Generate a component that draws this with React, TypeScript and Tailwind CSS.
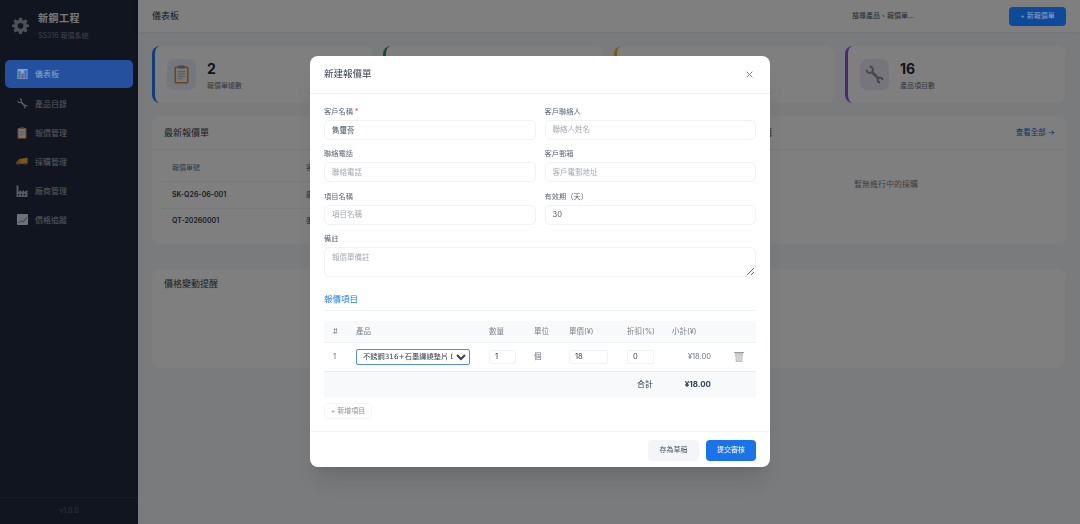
import React from "react";

const BarsIcon = () => (
  <svg viewBox="0 0 12 12" className="w-[11px] h-[12px]">
    <rect x="0.5" y="0.5" width="11" height="11" fill="#e8edf2" />
    <rect x="1.5" y="3" width="2.4" height="8" fill="#35b36b" />
    <rect x="4.8" y="5.5" width="2.4" height="5.5" fill="#e5476f" />
    <rect x="8.1" y="2" width="2.4" height="9" fill="#3a8fe0" />
  </svg>
);

const WrenchIcon = ({ className, color }: { className: string; color: string }) => (
  <svg viewBox="0 0 24 24" className={className} fill="none" stroke={color}>
    <path d="M2 6A4 4 0 1 0 6 2" strokeWidth="2.5" />
    <path d="M22 19A3 3 0 1 0 19 22" strokeWidth="2.5" />
    <path d="M8.500 8.500l8.500 8.500" strokeWidth="3.500" />
  </svg>
);

const ClipboardIcon = ({ className }: { className: string }) => (
  <svg viewBox="0 0 16 20" className={className}>
    <rect x="0.5" y="1.5" width="15" height="18" rx="1.5" fill="#e08a3c" />
    <rect x="2.2" y="3" width="11.6" height="15" fill="#f2f2f2" />
    <rect x="4.5" y="0.5" width="7" height="3" rx="0.8" fill="#8c8f94" />
    <path d="M4 7h8M4 9.5h8M4 12h8M4 14.5h5" stroke="#a5a8ad" strokeWidth="1" />
  </svg>
);

const TruckIcon = () => (
  <svg viewBox="0 0 14 10" className="w-[13px] h-[10px]">
    <path d="M4 1.500 13.500 0v7H0.500V5.500L2.500 3Z" fill="#f0b429" />
    <path d="M0.500 5.500 2.500 3H5v4.500H0.500Z" fill="#e8862a" />
    <circle cx="3" cy="8" r="1.400" fill="#555" />
    <circle cx="10.500" cy="8" r="1.400" fill="#555" />
  </svg>
);

const FactoryIcon = () => (
  <svg viewBox="0 0 12 12" className="w-[12px] h-[12px]">
    <path d="M0.500 12V0.500h2V7L5 5v2l3-2v2l3.500-2v7Z" fill="#a9b3c4" />
    <rect x="2" y="9" width="1.400" height="1.400" fill="#1f2a3d" />
    <rect x="5" y="9" width="1.400" height="1.400" fill="#1f2a3d" />
    <rect x="8" y="9" width="1.400" height="1.400" fill="#1f2a3d" />
  </svg>
);

const LineChartIcon = () => (
  <svg viewBox="0 0 12 12" className="w-[11px] h-[11px]">
    <rect width="12" height="12" rx="1" fill="#dfe4ea" />
    <path d="M1 10 4.500 7.500 7 8.500 11 3.500" stroke="#7f96b5" strokeWidth="1.200" fill="none" />
  </svg>
);

const GearIcon = () => (
  <svg viewBox="0 0 24 24" className="w-[17px] h-[17px]">
    <path
      fill="#9aa0a8"
      fillRule="evenodd"
      d="M10 1h4l.6 3.100 1.900.8L19.200 3 22 5.800l-1.900 2.700.8 1.900L24 11v3l-3.100.6-.8 1.900L22 19.200 19.200 22l-2.700-1.900-1.900.8L14 24h-4l-.6-3.100-1.900-.8L4.800 22 2 19.200l1.900-2.700-.8-1.900L0 14v-3l3.100-.6.8-1.900L2 5.800 4.800 3l2.700 1.900 1.900-.8ZM12 8.500a4 4 0 1 0 0 8 4 4 0 0 0 0-8Z"
    />
  </svg>
);

const TrashIcon = () => (
  <svg viewBox="0 0 10 11" className="w-[10px] h-[11px]">
    <path d="M0 1h10v1H0Z" fill="#9a9ea3" />
    <path d="M1 2h8l-.7 9H1.700Z" fill="#c2c5c8" />
    <path d="M3 3.500 3.500 10M5 3.500V10M7 3.500 6.500 10" stroke="#eceded" strokeWidth="0.6" />
  </svg>
);

const navItems = [
  { label: "儀表板", icon: <BarsIcon />, active: true },
  { label: "產品目錄", icon: <WrenchIcon className="w-[11px] h-[11px]" color="#b5bac2" /> },
  { label: "報價管理", icon: <ClipboardIcon className="w-[10px] h-[12px]" /> },
  { label: "採購管理", icon: <TruckIcon /> },
  { label: "廠商管理", icon: <FactoryIcon /> },
  { label: "價格追蹤", icon: <LineChartIcon /> },
];

const Sidebar = () => (
  <aside className="w-[138px] shrink-0 flex flex-col bg-[#202b3f]">
    <div className="h-[60px] flex items-start pl-[12px] pt-[11px] gap-[9px]">
      <div className="pt-[6px]">
        <GearIcon />
      </div>
      <div>
        <div className="text-[10px] leading-[14px] font-bold text-[#f0f0f0] tracking-[0.5px]">新鋼工程</div>
        <div className="text-[7px] leading-[10px] mt-[6px] text-[#7d8798]">SS316 報價系統</div>
      </div>
    </div>
    <nav className="flex flex-col px-[5px]">
      {navItems.map((item) => (
        <div
          key={item.label}
          className={
            item.active
              ? "relative z-10 h-[28px] flex items-center gap-[7px] pl-[11px] rounded-[5px] mb-[1px] bg-[#24509e] text-[#8ea3c8]"
              : "h-[29px] flex items-center gap-[7px] pl-[11px] text-[#aab4c2]"
          }
        >
          <span className={item.active ? "w-[12px] flex justify-center opacity-50" : "w-[12px] flex justify-center"}>
            {item.icon}
          </span>
          <span className="text-[8px]">{item.label}</span>
        </div>
      ))}
    </nav>
    <div className="mt-auto h-[27px] border-t border-[#2d394e] flex items-center justify-center text-[7px] text-[#5f6b7e]">
      v1.0.0
    </div>
  </aside>
);

const stats = [
  { value: "2", label: "報價單總數", border: "border-[#1e7cf0]", box: "bg-[#e6f0fc]", icon: <ClipboardIcon className="w-[15px] h-[19px]" /> },
  { value: "0", label: "待審核", border: "border-[#1aa35f]", box: "bg-[#e6f6ec]", icon: null },
  { value: "0", label: "採購中", border: "border-[#f0b429]", box: "bg-[#fdf4de]", icon: null },
  { value: "16", label: "產品項目數", border: "border-[#9b4fe0]", box: "bg-[#f0e8f8]", icon: <WrenchIcon className="w-[19px] h-[19px]" color="#8f949b" /> },
];

const Dashboard = () => (
  <div className="flex-1 min-w-0 flex flex-col bg-[#f5f7fa]">
    <header className="h-[32px] shrink-0 bg-white shadow-[0_1px_3px_rgba(0,0,0,0.08)] flex items-center pl-[14px] pr-[14px]">
      <span className="text-[9px] text-[#333b48]">儀表板</span>
      <span className="ml-auto text-[7px] text-[#4b5563] w-[157px]">搜尋產品、報價單...</span>
      <button className="relative z-10 h-[19px] w-[57px] rounded-[4px] bg-[#0e4a9a] text-[#8ea3c8] text-[7px]">+ 新報價單</button>
    </header>
    <main className="pl-[14px] pr-[15px] pt-[14px] flex flex-col">
      <div className="grid grid-cols-4 gap-[11px]">
        {stats.map((s) => (
          <div key={s.label} className={`h-[57px] bg-white rounded-[8px] border-l-[3px] ${s.border} flex items-center pl-[12px] gap-[11px]`}>
            <div className={`w-[29px] h-[31px] rounded-[7px] flex items-center justify-center ${s.box}`}>{s.icon}</div>
            <div className="pt-[1px]">
              <div className="text-[14px] leading-[17px] font-bold text-[#1f2937]">{s.value}</div>
              <div className="text-[7px] leading-[10px] mt-[4px] text-[#6b7280]">{s.label}</div>
            </div>
          </div>
        ))}
      </div>
      <div className="grid grid-cols-[543px_360px] gap-[11px] mt-[13px]">
        <section className="h-[128px] bg-white rounded-[8px]">
          <div className="h-[34px] border-b border-[#f0f2f5] flex items-center pl-[12px] text-[9px] text-[#333b48]">最新報價單</div>
          <div className="px-[10px] pt-[6px]">
            <div className="h-[26px] border-b border-[#eef0f3] flex items-center pl-[10px] text-[7px] text-[#6b7280]">
              <span className="w-[134px]">報價單號</span>
              <span>客戶</span>
            </div>
            <div className="h-[27px] border-b border-[#f0f2f5] flex items-center pl-[10px] text-[7px] font-semibold text-[#333b48]">
              <span className="w-[134px]">SK-Q26-06-001</span>
              <span className="font-normal">廣昌</span>
            </div>
            <div className="h-[25px] flex items-center pl-[10px] text-[7px] font-semibold text-[#333b48]">
              <span className="w-[134px]">QT-20260001</span>
              <span className="font-normal">張先生</span>
            </div>
          </div>
        </section>
        <section className="h-[128px] bg-white rounded-[8px] flex flex-col">
          <div className="h-[34px] shrink-0 border-b border-[#f0f2f5] flex items-center pl-[12px] pr-[11px] text-[9px] text-[#333b48]">
            <span>進行中的採購</span>
            <span className="ml-auto text-[7.5px] text-[#1a66c8]">查看全部 →</span>
          </div>
          <div className="flex-1 flex items-center justify-center text-[8px] text-[#7a8088] pb-[26px]">暫無進行中的採購</div>
        </section>
      </div>
      <section className="h-[99px] mt-[25px] bg-white rounded-[8px] pl-[12px] pt-[8px] text-[9px] text-[#333b48]">價格變動提醒</section>
    </main>
  </div>
);

const Field = ({
  label,
  placeholder,
  value,
  required,
}: {
  label: string;
  placeholder?: string;
  value?: string;
  required?: boolean;
}) => (
  <label className="block">
    <span className="block h-[10px] leading-[10px] text-[7.25px] text-[#5d6675]">
      {label}
      {required && <span className="text-[#ef4444]"> *</span>}
    </span>
    <input
      readOnly
      value={value}
      placeholder={placeholder}
      className="block w-full mt-[3px] h-[20px] px-[7px] rounded-[5px] border border-[#f0f2f6] text-[7.5px] text-[#4b5563] placeholder:text-[#a3a9b3] outline-none"
    />
  </label>
);

const QuoteModal = () => (
  <div className="fixed inset-0 z-0 bg-black/50 flex items-center justify-center pb-[1px]">
    <div className="relative z-20 w-[460px] h-[411px] bg-white rounded-[8px] shadow-xl flex flex-col">
      <div className="h-[38px] shrink-0 border-b border-[#eceff3] flex items-center pl-[14px] pr-[17px]">
        <span className="text-[9.5px] text-[#374151]">新建報價單</span>
        <svg viewBox="0 0 10 10" className="ml-auto w-[7px] h-[7px]">
          <path d="M1 1l8 8M9 1l-8 8" stroke="#7a8088" strokeWidth="1.400" />
        </svg>
      </div>
      <div className="flex-1 px-[14px] pt-[12.5px]">
        <div className="grid grid-cols-2 gap-x-[9px] gap-y-[9.5px]">
          <Field label="客戶名稱" required value="雋璽薈" />
          <Field label="客戶聯絡人" placeholder="聯絡人姓名" />
          <Field label="聯絡電話" placeholder="聯絡電話" />
          <Field label="客戶郵箱" placeholder="客戶電郵地址" />
          <Field label="項目名稱" placeholder="項目名稱" />
          <Field label="有效期（天）" value="30" />
        </div>
        <label className="block mt-[9.5px]">
          <span className="block h-[10px] leading-[10px] text-[7.25px] text-[#5d6675]">備註</span>
          <textarea
            readOnly
            placeholder="報價單備註"
            className="block w-full mt-[3px] h-[30px] px-[7px] py-[4px] rounded-[5px] border border-[#f0f2f6] text-[7.5px] placeholder:text-[#a3a9b3] outline-none"
          />
        </label>
        <div className="mt-[17px] pb-[6px] h-[17px] border-b border-[#eef1f5] text-[8.5px] leading-[10px] text-[#1e7cf0]">報價項目</div>
        <table className="mt-[10px] w-[432px] table-fixed border-collapse text-[7.5px] text-[#6b7280]">
          <colgroup>
            <col className="w-[23px]" />
            <col className="w-[133px]" />
            <col className="w-[45px]" />
            <col className="w-[35px]" />
            <col className="w-[58px]" />
            <col className="w-[45px]" />
            <col className="w-[57px]" />
            <col className="w-[36px]" />
          </colgroup>
          <thead>
            <tr className="h-[21px] bg-[#f7f9fb] border-b border-[#eef1f5] text-left text-[#7a8088]">
              <th className="pl-[9px] font-normal">#</th>
              <th className="pl-[9px] font-normal">產品</th>
              <th className="pl-[9px] font-normal">數量</th>
              <th className="pl-[9px] font-normal">單位</th>
              <th className="pl-[9px] font-normal">單價(¥)</th>
              <th className="pl-[9px] font-normal">折扣(%)</th>
              <th className="pl-[9px] font-normal">小計(¥)</th>
              <th />
            </tr>
          </thead>
          <tbody>
            <tr className="h-[29px] border-b border-[#e8ebf0]">
              <td className="pl-[9px]">1</td>
              <td className="pl-[9px]">
                <select className="block w-[114px] h-[16px] pl-[2px] rounded-[2px] border border-[#4f8fd8] bg-white text-[7.25px] text-[#374151] font-['DejaVu_Sans','Noto_Sans_CJK_TC',sans-serif] outline-none">
                  <option>不銹鋼316+石墨纏繞墊片 DN50</option>
                </select>
              </td>
              <td className="pl-[9px]">
                <input readOnly value="1" className="block w-[27px] h-[14px] pl-[5px] rounded-[2px] border border-[#f0f2f6] text-[#374151] outline-none" />
              </td>
              <td className="pl-[9px]">個</td>
              <td className="pl-[9px]">
                <input readOnly value="18" className="block w-[39px] h-[14px] pl-[5px] rounded-[2px] border border-[#f0f2f6] text-[#374151] outline-none" />
              </td>
              <td className="pl-[9px]">
                <input readOnly value="0" className="block w-[27px] h-[14px] pl-[5px] rounded-[2px] border border-[#f0f2f6] text-[#374151] outline-none" />
              </td>
              <td className="pr-[9px] text-right">¥18.00</td>
              <td className="pl-[14px]">
                <TrashIcon />
              </td>
            </tr>
            <tr className="h-[26px] bg-[#f7f9fb] text-[#374151]">
              <td colSpan={5} />
              <td className="pr-[10px] text-right text-[8px]">合計</td>
              <td className="pr-[9px] text-right text-[8px] font-bold">¥18.00</td>
              <td />
            </tr>
          </tbody>
        </table>
        <button className="block mt-[6px] w-[48px] h-[16px] rounded-[4px] border border-[#f5f6f8] text-[7px] text-[#8a9099]">+ 新增項目</button>
      </div>
      <div className="h-[36px] shrink-0 border-t border-[#f3f4f7] flex items-center justify-end gap-[7px] pr-[14px] pt-[1px]">
        <button className="w-[51px] h-[21px] rounded-[4px] bg-[#f3f5f8] text-[7px] text-[#4b5563]">存為草稿</button>
        <button className="w-[50px] h-[21px] rounded-[4px] bg-[#1a73e8] text-[7px] text-white">提交審核</button>
      </div>
    </div>
  </div>
);

export default function App() {
  return (
    <div className="relative h-[524px] w-[1080px] overflow-hidden flex font-['Inter','Noto_Sans_CJK_TC',sans-serif]">
      <Sidebar />
      <Dashboard />
      <QuoteModal />
    </div>
  );
}
